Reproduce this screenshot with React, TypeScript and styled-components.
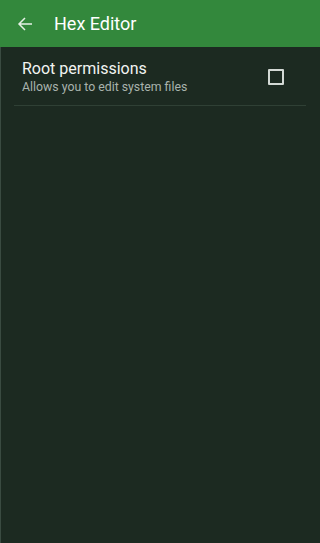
import React from "react";
import styled, { createGlobalStyle } from "styled-components";

const Global = createGlobalStyle`
  html, body { margin: 0; padding: 0; height: 100%; background: #1c2a21; }
  #root { height: 100%; }
  * { box-sizing: border-box; }
`;

const Screen = styled.div`
  height: 543px;
  width: 320px;
  display: flex;
  flex-direction: column;
  background: #1c2a21;
  font-family: Roboto, "Noto Sans", sans-serif;
  overflow: hidden;
`;

const Toolbar = styled.header`
  height: 47px;
  flex: none;
  display: flex;
  align-items: center;
  background: #33883c;
  color: #ffffff;
`;

const BackButton = styled.div`
  width: 54px;
  height: 47px;
  display: flex;
  align-items: center;
  padding-left: 17px;
`;

const Title = styled.h1`
  margin: 0;
  font-size: 18px;
  font-weight: 400;
  color: #ffffff;
`;

const Body = styled.main`
  flex: 1;
  border-left: 1px solid #3a4b41;
  display: flex;
  flex-direction: column;
  padding: 0 14px 0 13px;
`;

const Row = styled.div`
  display: flex;
  align-items: center;
  justify-content: space-between;
  height: 59px;
  border-bottom: 1px solid #2f4035;
  padding: 2px 22px 0 8px;
`;

const Texts = styled.div`
  display: flex;
  flex-direction: column;
`;

const Primary = styled.div`
  font-size: 16px;
  color: #f2f4f2;
  line-height: 20px;
`;

const Secondary = styled.div`
  font-size: 12.3px;
  color: #a9b3ad;
  line-height: 17px;
`;

const Checkbox = styled.div`
  width: 16px;
  height: 16px;
  border: 2px solid #d3d9d5;
  border-radius: 1px;
`;

export default function App() {
  return (
    <>
      <Global />
      <Screen>
        <Toolbar>
          <BackButton>
            <svg width="16" height="16" viewBox="0 0 16 16" fill="none">
              <path d="M15 8H2M8 2L2 8l6 6" stroke="#e6f1e6" strokeWidth="1.5" />
            </svg>
          </BackButton>
          <Title>Hex Editor</Title>
        </Toolbar>
        <Body>
          <Row>
            <Texts>
              <Primary>Root permissions</Primary>
              <Secondary>Allows you to edit system files</Secondary>
            </Texts>
            <Checkbox />
          </Row>
        </Body>
      </Screen>
    </>
  );
}
